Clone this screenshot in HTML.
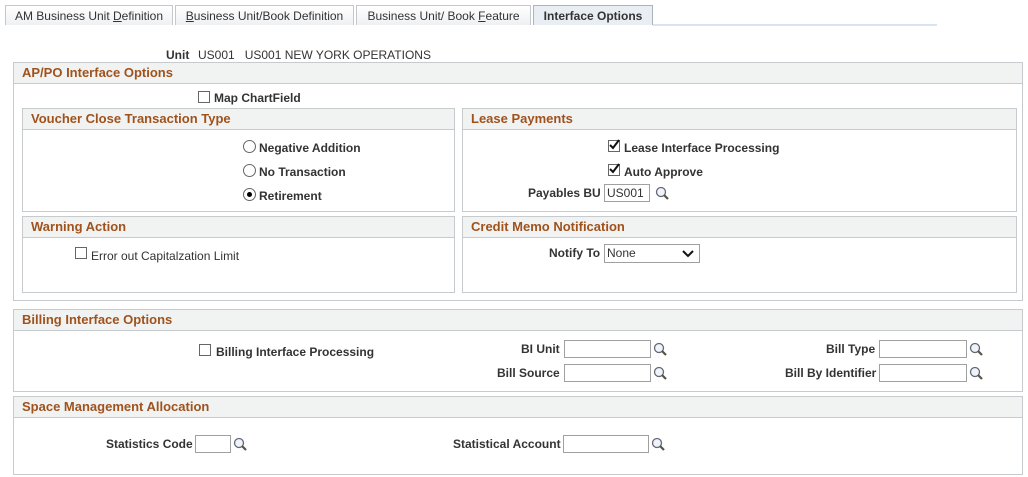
<!DOCTYPE html>
<html><head><style>
body{margin:0;width:1028px;height:477px;background:#fff;font-family:"Liberation Sans",Arial,sans-serif;font-size:12px;color:#333;position:relative;overflow:hidden}
.a{position:absolute}
.tab{position:absolute;top:5px;height:20px;border:1px solid #c4c8cc;border-bottom:none;background:linear-gradient(#fff,#eef0f2);font-size:12px;color:#333;line-height:21px;text-align:center;box-sizing:border-box}
.box{position:absolute;border:1px solid #c8cbce;box-sizing:border-box}
.hd{position:absolute;left:0;right:0;top:0;height:21px;background:#f1f3f3;border-bottom:1px solid #c8cbce;color:#a0521c;font-weight:bold;font-size:13px;line-height:20px;padding-left:8px;box-sizing:border-box}
.lb{position:absolute;font-weight:bold;white-space:nowrap}
.cb{position:absolute;width:12px;height:12px;border:1px solid #666;background:#fff;box-sizing:border-box}
.rd{position:absolute;width:13px;height:13px;border:1px solid #666;border-radius:50%;background:#fff;box-sizing:border-box}
.in{position:absolute;height:18px;border:1px solid #a0a0a0;background:#fff;box-sizing:border-box;font-size:12px;line-height:16px;padding-left:2px}
.mg{position:absolute;width:14px;height:14px}
</style></head><body>
<div class="tab" style="left:5px;width:168px">AM Business Unit <u>D</u>efinition</div>
<div class="tab" style="left:175px;width:179px"><u>B</u>usiness Unit/Book Definition</div>
<div class="tab" style="left:356px;width:175px">Business Unit/ Book <u>F</u>eature</div>
<div class="tab" style="left:533px;width:120px;background:#e8eef4;border-color:#a8b4c0;font-weight:bold">Interface Options</div>
<div class="a" style="left:653px;top:24px;width:284px;height:2px;background:#d8e4f0"></div>

<div class="lb" style="left:166px;top:48px">Unit</div>
<div class="a" style="left:198px;top:48px">US001&nbsp;&nbsp;&nbsp;US001 NEW YORK OPERATIONS</div>

<div class="box" style="left:13px;top:62px;width:1010px;height:239px"><div class="hd">AP/PO Interface Options</div></div>
<div class="cb" style="left:198px;top:91px"></div><div class="lb" style="left:214px;top:91px">Map ChartField</div>

<div class="box" style="left:22px;top:108px;width:433px;height:104px"><div class="hd">Voucher Close Transaction Type</div></div>
<div class="rd" style="left:243px;top:140px"></div><div class="lb" style="left:259px;top:141px">Negative Addition</div>
<div class="rd" style="left:243px;top:164px"></div><div class="lb" style="left:259px;top:165px">No Transaction</div>
<div class="rd" style="left:243px;top:188px"><div class="a" style="left:3px;top:3px;width:5px;height:5px;border-radius:50%;background:#000"></div></div><div class="lb" style="left:259px;top:189px">Retirement</div>

<div class="box" style="left:462px;top:108px;width:555px;height:104px"><div class="hd">Lease Payments</div></div>
<div class="cb" style="left:608px;top:140px"><svg width="12" height="12" style="position:absolute;left:-1px;top:-2px"><path d="M2 6 L5 9 L11 1" stroke="#111" stroke-width="2" fill="none"/></svg></div><div class="lb" style="left:624px;top:141px">Lease Interface Processing</div>
<div class="cb" style="left:608px;top:164px"><svg width="12" height="12" style="position:absolute;left:-1px;top:-2px"><path d="M2 6 L5 9 L11 1" stroke="#111" stroke-width="2" fill="none"/></svg></div><div class="lb" style="left:624px;top:165px">Auto Approve</div>
<div class="lb" style="left:528px;top:186px">Payables BU</div>
<div class="in" style="left:604px;top:184px;width:46px">US001</div>

<div class="box" style="left:22px;top:216px;width:433px;height:77px"><div class="hd">Warning Action</div></div>
<div class="cb" style="left:75px;top:247px"></div><div class="lb" style="left:91px;top:249px;font-weight:normal">Error out Capitalzation Limit</div>

<div class="box" style="left:462px;top:216px;width:555px;height:77px"><div class="hd">Credit Memo Notification</div></div>
<div class="lb" style="left:549px;top:246px">Notify To</div>
<div class="in" style="left:604px;top:244px;width:96px;height:19px">None<svg width="12" height="8" style="position:absolute;right:5px;top:5px"><path d="M1 1 L6 6 L11 1" stroke="#111" stroke-width="2" fill="none"/></svg></div>

<div class="box" style="left:13px;top:309px;width:1010px;height:83px"><div class="hd">Billing Interface Options</div></div>
<div class="cb" style="left:199px;top:344px"></div><div class="lb" style="left:216px;top:345px">Billing Interface Processing</div>
<div class="lb" style="left:521px;top:342px">BI Unit</div><div class="in" style="left:564px;top:340px;width:87px"></div>
<div class="lb" style="left:497px;top:366px">Bill Source</div><div class="in" style="left:564px;top:364px;width:87px"></div>
<div class="lb" style="left:826px;top:342px">Bill Type</div><div class="in" style="left:879px;top:340px;width:88px"></div>
<div class="lb" style="left:785px;top:366px">Bill By Identifier</div><div class="in" style="left:879px;top:364px;width:88px"></div>

<div class="box" style="left:13px;top:396px;width:1010px;height:79px"><div class="hd">Space Management Allocation</div></div>
<div class="lb" style="left:106px;top:437px">Statistics Code</div><div class="in" style="left:195px;top:435px;width:36px"></div>
<div class="lb" style="left:453px;top:437px">Statistical Account</div><div class="in" style="left:563px;top:435px;width:86px"></div>

<svg class="mg" style="left:655px;top:186px"><circle cx="6" cy="6" r="4.5" stroke="#667" stroke-width="1.3" fill="#eef4fa"/><path d="M9 9 L13 13" stroke="#554" stroke-width="2.2"/></svg>
<svg class="mg" style="left:653px;top:342px"><circle cx="6" cy="6" r="4.5" stroke="#667" stroke-width="1.3" fill="#eef4fa"/><path d="M9 9 L13 13" stroke="#554" stroke-width="2.2"/></svg>
<svg class="mg" style="left:653px;top:366px"><circle cx="6" cy="6" r="4.5" stroke="#667" stroke-width="1.3" fill="#eef4fa"/><path d="M9 9 L13 13" stroke="#554" stroke-width="2.2"/></svg>
<svg class="mg" style="left:969px;top:342px"><circle cx="6" cy="6" r="4.5" stroke="#667" stroke-width="1.3" fill="#eef4fa"/><path d="M9 9 L13 13" stroke="#554" stroke-width="2.2"/></svg>
<svg class="mg" style="left:969px;top:366px"><circle cx="6" cy="6" r="4.5" stroke="#667" stroke-width="1.3" fill="#eef4fa"/><path d="M9 9 L13 13" stroke="#554" stroke-width="2.2"/></svg>
<svg class="mg" style="left:233px;top:437px"><circle cx="6" cy="6" r="4.5" stroke="#667" stroke-width="1.3" fill="#eef4fa"/><path d="M9 9 L13 13" stroke="#554" stroke-width="2.2"/></svg>
<svg class="mg" style="left:651px;top:437px"><circle cx="6" cy="6" r="4.5" stroke="#667" stroke-width="1.3" fill="#eef4fa"/><path d="M9 9 L13 13" stroke="#554" stroke-width="2.2"/></svg>
</body></html>
